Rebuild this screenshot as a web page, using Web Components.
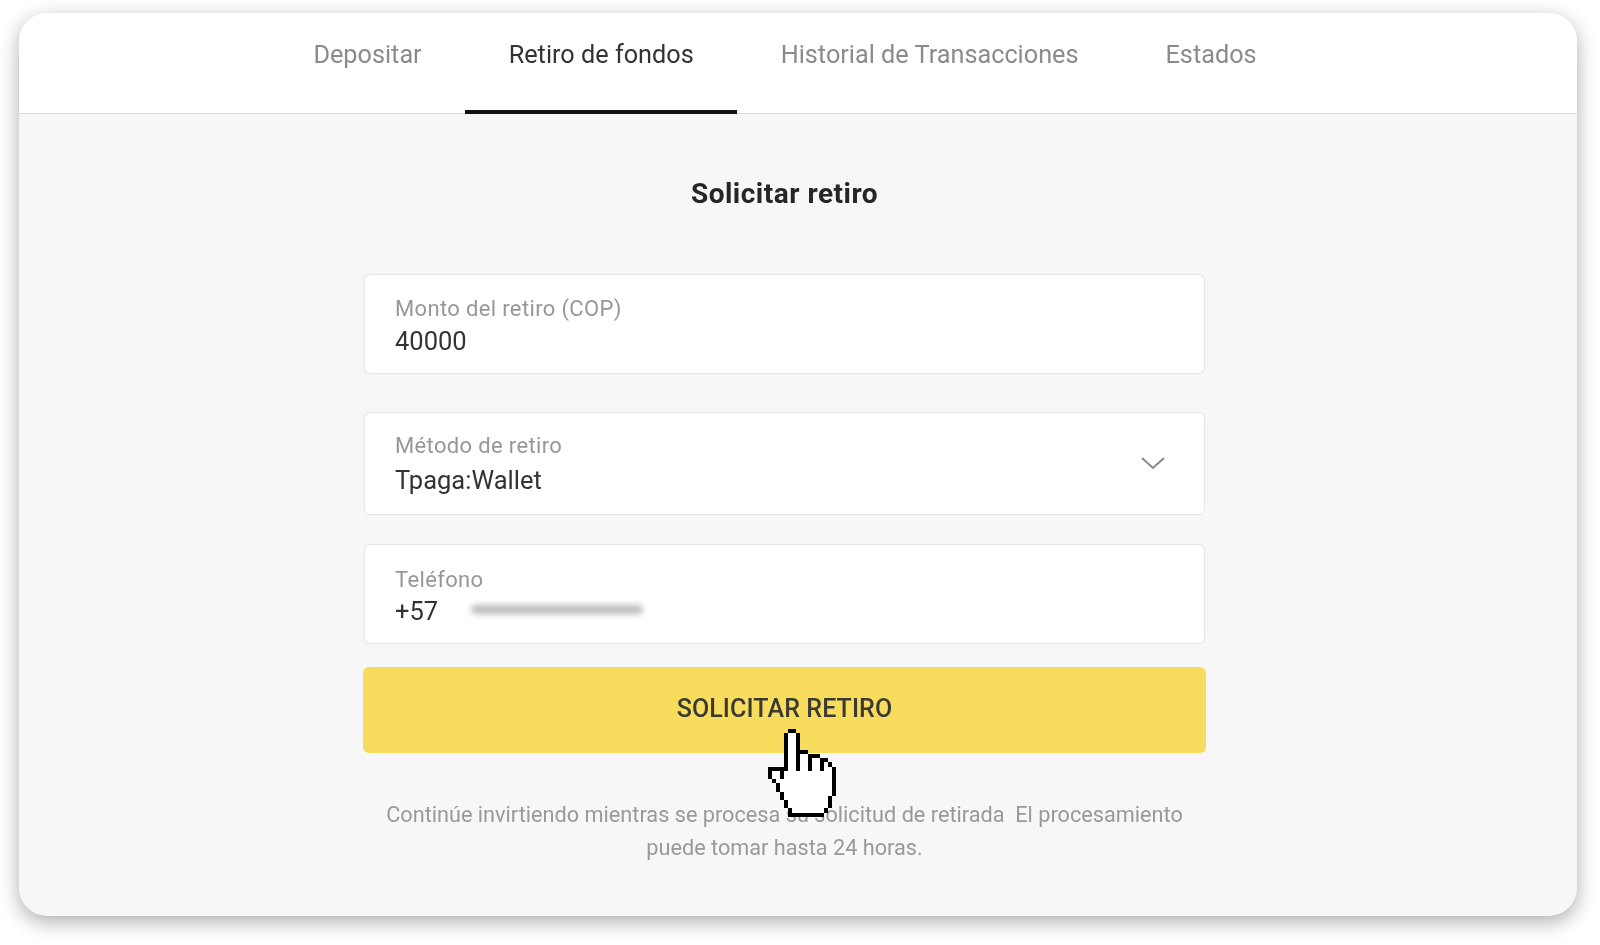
<!DOCTYPE html>
<html lang="es"><head><meta charset="utf-8"><title>Solicitar retiro</title>
<style>html,body{margin:0;height:945px;overflow:hidden;background:#fff;font-family:Roboto,"Liberation Sans",sans-serif}</style></head>
<body>
<wd-panel>
  <wd-tabs slot="tabs">
    <wd-tab>Depositar</wd-tab><wd-tab active>Retiro de fondos</wd-tab><wd-tab>Historial de Transacciones</wd-tab><wd-tab>Estados</wd-tab>
  </wd-tabs>
  <wd-form>
    <wd-field label="Monto del retiro (COP)" style="height:100px;--lt:22px;--vt:5px">40000</wd-field>
    <wd-field label="Método de retiro" select style="height:103px;--lt:21px;--vt:7px;margin-top:38px">Tpaga:Wallet</wd-field>
    <wd-field label="Teléfono" phone style="height:100px;--lt:23px;--vt:4px;margin-top:29px">+57</wd-field>
    <wd-button>Solicitar retiro</wd-button>
    <wd-note>Continúe invirtiendo mientras se procesa su solicitud de retirada&nbsp; El procesamiento<br>puede tomar hasta 24 horas.</wd-note>
  </wd-form>
  <wd-pointer></wd-pointer>
</wd-panel>
<script>
function def(name, html){
  customElements.define(name, class extends HTMLElement{
    connectedCallback(){
      if(this.shadowRoot) return;
      const r=this.attachShadow({mode:'open'});
      r.innerHTML=typeof html==='function'?html(this):html;
    }
  });
}
def('wd-panel',`<style>
:host{display:block;position:relative;box-sizing:border-box;margin:13px 23px 0 19px;height:903px;width:1558px;border-radius:28px;background:#f7f7f7;box-shadow:0 6px 20px rgba(0,0,0,.32)}
.clip{height:100%;border-radius:28px;overflow:hidden;display:flex;flex-direction:column}
</style><div class="clip"><slot name="tabs"></slot><slot></slot></div>`);
def('wd-tabs',`<style>
:host{display:flex;justify-content:center;flex:none;height:101px;box-sizing:border-box;background:#fff;border-bottom:1px solid #dcdcdc;padding-right:26px}
</style><slot></slot>`);
def('wd-tab',t=>`<style>
:host{display:block;box-sizing:border-box;height:101px;padding:26px 43.5px 0;font-size:25.25px;line-height:32px;color:${t.hasAttribute('active')?'#333':'#8b8b8b'};white-space:nowrap;${t.hasAttribute('active')?'border-bottom:4px solid #111;':''}filter:blur(.4px)}
</style><slot></slot>`);
def('wd-form',`<style>
:host{display:block;width:843px;margin-left:344px}
h2{margin:0 0 64px;padding-top:64px;height:32px;text-align:center;font-size:28px;letter-spacing:.5px;line-height:32px;font-weight:700;color:#262626;filter:blur(.35px)}
</style><h2>Solicitar retiro</h2><slot></slot>`);
def('wd-field',t=>`<style>
:host{display:block;box-sizing:border-box;margin-left:1px;width:841px;background:#fff;border:1px solid #e6e6e6;border-radius:6px;padding:0 30px;position:relative;color:#333;box-shadow:0 0 2px rgba(0,0,0,.05)}
.l{display:block;padding-top:var(--lt);font-size:22px;letter-spacing:.35px;line-height:24px;color:#979797;filter:blur(.4px)}
.v{display:block;margin-top:var(--vt);font-size:25.5px;line-height:30px;filter:blur(.35px)}
svg{position:absolute;right:38px;top:42px}
.b{position:absolute;left:106px;top:60px;width:172px;height:9px;border-radius:5px;background:#b9b9b9;filter:blur(3px)}
</style><span class="l">${t.getAttribute('label')}</span><span class="v"><slot></slot></span>
${t.hasAttribute('select')?'<svg width="26" height="18" viewBox="0 0 26 18"><path d="M2 3l11 10L24 3" fill="none" stroke="#8a8a8a" stroke-width="2"/></svg>':''}
${t.hasAttribute('phone')?'<i class="b"></i>':''}`);
def('wd-button',`<style>
:host{display:block;margin-top:23px;height:86px;box-sizing:border-box;background:#f8dc5e;border-radius:6px;text-align:center;font-size:25px;letter-spacing:.1px;line-height:84px;font-weight:500;text-transform:uppercase;color:#3a3a33}
span{filter:blur(.35px);display:block}
</style><span><slot></slot></span>`);
def('wd-note',`<style>
:host{display:block;margin-top:45px;text-align:center;font-size:21.7px;line-height:33px;color:#999;white-space:nowrap;filter:blur(.4px)}
</style><slot></slot>`);
(function(){
 // pixel hand: black outline cells on a white body
 const black=[[5,0,2,1],[4,1,1,9],[7,1,1,9],[8,5,2,1],[10,6,1,4],[11,6,2,1],[13,7,1,3],[14,7,1,1],[15,8,1,1],[16,9,1,7],[15,16,1,3],[0,9,1,3],[1,9,3,1],[3,10,1,2],[1,12,1,1],[2,13,1,2],[3,15,1,2],[4,17,1,2],[5,19,1,2],[6,20,8,1],[14,19,1,1]];
 const rects=black.map(b=>`<rect x="${b[0]}" y="${b[1]}" width="${b[2]}" height="${b[3]}"/>`).join('');
 def('wd-pointer',`<style>
:host{display:block;position:absolute;left:749px;top:716px;width:68px;height:92px}
svg{display:block}
</style><svg width="68" height="92" viewBox="0 0 17 22" preserveAspectRatio="none" shape-rendering="crispEdges">
<path fill="#fff" d="M5 1h2v4h3v1h3v1h2v1h1v1h1v7h-1v3h-1v1h-1v1H6v-1H5v-2H4v-2H3v-2H2v-2H1v-1H0V9h3v1h1V1z"/>
<g fill="#000">${rects}</g></svg>`);
})();
</script>
</body></html>
